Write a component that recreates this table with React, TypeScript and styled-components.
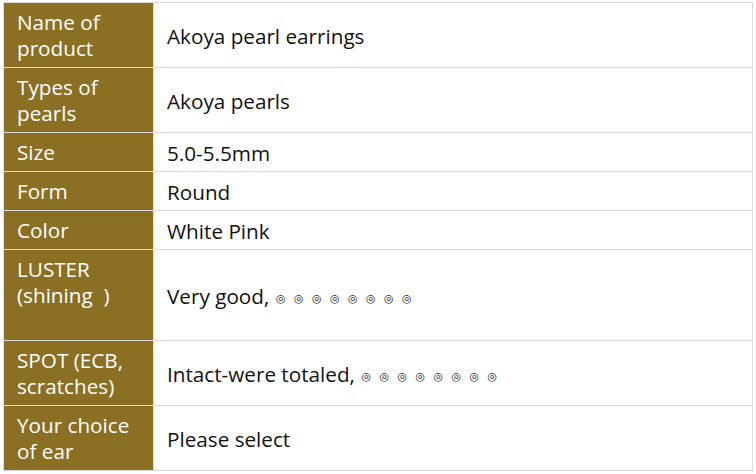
import React from 'react';
import styled, { createGlobalStyle } from 'styled-components';

const GlobalStyle = createGlobalStyle`
  body {
    margin: 0;
    background: #fff;
    font-family: 'Open Sans', 'Noto Sans', sans-serif;
  }
`;

type Row = {
  label: string[];
  value: string;
  dots?: boolean;
};

const ROWS: Row[] = [
  { label: ['Name of', 'product'], value: 'Akoya pearl earrings' },
  { label: ['Types of', 'pearls'], value: 'Akoya pearls' },
  { label: ['Size'], value: '5.0-5.5mm' },
  { label: ['Form'], value: 'Round' },
  { label: ['Color'], value: 'White Pink' },
  { label: ['LUSTER', '(shining\u00a0\u00a0)', '\u00a0'], value: 'Very good,', dots: true },
  { label: ['SPOT (ECB,', 'scratches)'], value: 'Intact-were totaled,', dots: true },
  { label: ['Your choice', 'of ear'], value: 'Please select' },
];

const DOTS = [0, 1, 2, 3, 4, 5, 6, 7];

function App() {
  return (
    <Page>
      <GlobalStyle />
      <Table>
        <tbody>
          {ROWS.map((row, idx) => (
            <tr key={idx}>
              <LabelCell>
                {row.label.map((line, i) => (
                  <Line key={i}>{line}</Line>
                ))}
              </LabelCell>
              <ValueCell>
                {row.value}
                {row.dots && (
                  <Dots>
                    {DOTS.map((d) => (
                      <Dot key={d}>◎</Dot>
                    ))}
                  </Dots>
                )}
              </ValueCell>
            </tr>
          ))}
        </tbody>
      </Table>
    </Page>
  );
}

export default App;

const Page = styled.div`
  padding: 2px 3px;
`;

const Table = styled.table`
  width: 750px;
  border-collapse: collapse;
  border: 1px solid #dcdcdc;
  font-size: 20.7px;
  line-height: 26px;
`;

const LabelCell = styled.td`
  width: 150px;
  box-sizing: border-box;
  padding: 6px 0 6px 13px;
  background: #8b7024;
  color: #fff;
  border: 1px solid #dcdcdc;
  vertical-align: middle;
`;

const Line = styled.div`
  white-space: pre;
`;

const ValueCell = styled.td`
  padding: 7px 13px 5px;
  color: #111;
  border: 1px solid #dcdcdc;
  vertical-align: middle;
`;

const Dots = styled.span`
  display: inline-flex;
  gap: 7px;
  margin-left: 6px;
  vertical-align: 2px;
`;

const Dot = styled.span`
  width: 11px;
  text-align: center;
  font-family: 'DejaVu Sans', sans-serif;
  font-size: 11px;
  line-height: 12px;
  color: #222;
`;
